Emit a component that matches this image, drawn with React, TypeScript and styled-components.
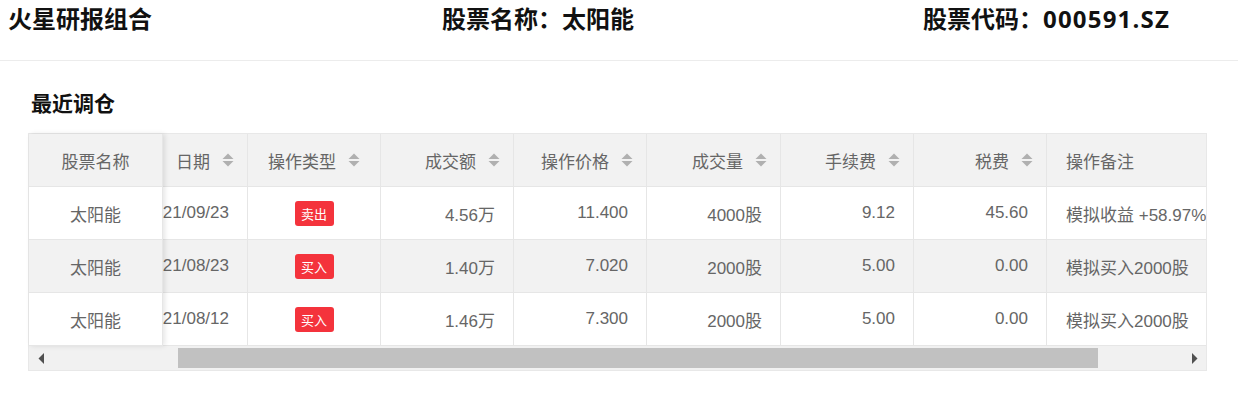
import React from 'react';
import styled, { createGlobalStyle } from 'styled-components';

type Align = 'left' | 'center' | 'right';

interface Column {
  key: string;
  title: string;
  width: number;
  align: Align;
  sortable?: boolean;
}

interface Trade {
  name: string;
  date: string;
  type: '买入' | '卖出';
  amount: string;
  price: string;
  volume: string;
  fee: string;
  tax: string;
  note: string;
}

const FIXED_WIDTH = 134;
const SCROLL_LEFT = 160;
const VIEW_WIDTH = 1177;
const ARROW_WIDTH = 24;

const columns: Column[] = [
  { key: 'date', title: '日期', width: 245, align: 'right', sortable: true },
  { key: 'type', title: '操作类型', width: 133, align: 'center', sortable: true },
  { key: 'amount', title: '成交额', width: 133, align: 'right', sortable: true },
  { key: 'price', title: '操作价格', width: 133, align: 'right', sortable: true },
  { key: 'volume', title: '成交量', width: 134, align: 'right', sortable: true },
  { key: 'fee', title: '手续费', width: 133, align: 'right', sortable: true },
  { key: 'tax', title: '税费', width: 133, align: 'right', sortable: true },
  { key: 'note', title: '操作备注', width: 266, align: 'left' },
];

const trades: Trade[] = [
  {
    name: '太阳能',
    date: '2021/09/23',
    type: '卖出',
    amount: '4.56万',
    price: '11.400',
    volume: '4000股',
    fee: '9.12',
    tax: '45.60',
    note: '模拟收益 +58.97%',
  },
  {
    name: '太阳能',
    date: '2021/08/23',
    type: '买入',
    amount: '1.40万',
    price: '7.020',
    volume: '2000股',
    fee: '5.00',
    tax: '0.00',
    note: '模拟买入2000股',
  },
  {
    name: '太阳能',
    date: '2021/08/12',
    type: '买入',
    amount: '1.46万',
    price: '7.300',
    volume: '2000股',
    fee: '5.00',
    tax: '0.00',
    note: '模拟买入2000股',
  },
];

const contentWidth = FIXED_WIDTH + columns.reduce((sum, c) => sum + c.width, 0);

const GlobalStyle = createGlobalStyle`
  body {
    margin: 0;
    background: #fff;
    font-family: "Liberation Sans", Arial, "Noto Sans CJK SC", sans-serif;
  }
`;

const Page = styled.div`
  width: 1238px;
`;

const TopBar = styled.header`
  display: grid;
  grid-template-columns: 434px 481px 1fr;
  height: 61px;
  box-sizing: border-box;
  padding: 3px 0 0 8px;
  border-bottom: 1px solid #ececec;
`;

const TopItem = styled.div`
  font-family: "Open Sans", "Noto Sans CJK SC", sans-serif;
  font-size: 24px;
  font-weight: 700;
  line-height: 32px;
  color: #111;
  white-space: nowrap;
`;

const Code = styled.span`
  letter-spacing: 1.2px;
`;

const Section = styled.section`
  padding: 27px 31px 0 28px;
`;

const SectionTitle = styled.h2`
  margin: 0 0 17px 3px;
  font-family: "Noto Sans CJK SC", sans-serif;
  font-size: 21px;
  font-weight: 700;
  line-height: 28px;
  color: #111;
`;

const Frame = styled.div`
  border: 1px solid #e8e8e8;
  background: #fff;
`;

const Body = styled.div`
  display: flex;
`;

const FixedPane = styled.div`
  position: relative;
  z-index: 1;
  flex: 0 0 ${FIXED_WIDTH}px;
  box-shadow: 2px 0 5px rgba(0, 0, 0, 0.1);
`;

const ScrollPane = styled.div`
  flex: 1;
  overflow: hidden;
`;

const ScrollInner = styled.div<{ $offset: number }>`
  width: ${contentWidth - FIXED_WIDTH}px;
  margin-left: -${(p) => p.$offset}px;
`;

const Row = styled.div<{ $striped?: boolean }>`
  display: flex;
  background: ${(p) => (p.$striped ? '#f2f2f2' : '#fff')};
`;

const justify = { left: 'flex-start', center: 'center', right: 'flex-end' };

const HeadCell = styled.div<{ $w?: number; $align: Align }>`
  display: flex;
  align-items: center;
  justify-content: ${(p) => justify[p.$align]};
  box-sizing: border-box;
  width: ${(p) => (p.$w ? `${p.$w}px` : 'auto')};
  flex-shrink: 0;
  height: 53px;
  padding: ${(p) => (p.$align === 'right' ? '0 13px 0 10px' : p.$align === 'left' ? '0 10px 0 19px' : '0 10px')};
  background: #f2f2f2;
  border-right: 1px solid #e6e6e6;
  border-bottom: 1px solid #e6e6e6;
  font-family: "Noto Sans CJK SC", sans-serif;
  font-size: 17px;
  color: #666;
  white-space: nowrap;
`;

const Cell = styled.div<{ $w?: number; $align: Align }>`
  display: flex;
  align-items: center;
  justify-content: ${(p) => justify[p.$align]};
  box-sizing: border-box;
  width: ${(p) => (p.$w ? `${p.$w}px` : 'auto')};
  flex-shrink: 0;
  height: 53px;
  padding: ${(p) => (p.$align === 'right' ? '0 18px 0 10px' : p.$align === 'left' ? '0 10px 0 19px' : '0 10px')};
  border-right: 1px solid #e6e6e6;
  border-bottom: 1px solid #e6e6e6;
  font-size: 17px;
  color: #666;
  white-space: nowrap;
  overflow: hidden;
`;

const Badge = styled.span`
  display: inline-flex;
  align-items: center;
  justify-content: center;
  width: 39px;
  height: 25px;
  border-radius: 3px;
  background: #f4333c;
  color: #fff;
  font-family: "Noto Sans CJK SC", sans-serif;
  font-size: 13px;
`;

const SortWrap = styled.span`
  display: inline-flex;
  margin-left: 12px;
`;

const Scrollbar = styled.div`
  display: flex;
  height: 24px;
  background: #f1f1f1;
`;

const ArrowButton = styled.div`
  display: flex;
  align-items: center;
  justify-content: center;
  flex: 0 0 ${ARROW_WIDTH}px;
`;

const Track = styled.div`
  flex: 1;
  padding: 2px 0;
`;

const Thumb = styled.div`
  height: 20px;
  background: #c1c1c1;
`;

const SortIcon = () => (
  <SortWrap>
    <svg width="12" height="14" viewBox="0 0 12 14">
      <path d="M0.5 6 L6 0.5 L11.5 6 Z" fill="#b0b0b0" />
      <path d="M0.5 8 L11.5 8 L6 13.5 Z" fill="#b0b0b0" />
    </svg>
  </SortWrap>
);

const Arrow = ({ dir }: { dir: 'left' | 'right' }) => (
  <svg width="7" height="11" viewBox="0 0 7 11">
    {dir === 'left' ? (
      <path d="M6 0 L6 11 L0.5 5.5 Z" fill="#505050" />
    ) : (
      <path d="M1 0 L1 11 L6.5 5.5 Z" fill="#505050" />
    )}
  </svg>
);

const renderValue = (trade: Trade, key: string) => {
  if (key === 'type') return <Badge>{trade.type}</Badge>;
  return trade[key as keyof Trade];
};

const App = () => {
  const trackLength = VIEW_WIDTH - ARROW_WIDTH * 2;
  const thumbLeft = (trackLength * SCROLL_LEFT) / contentWidth;
  const thumbWidth = (trackLength * VIEW_WIDTH) / contentWidth;

  return (
    <Page>
      <GlobalStyle />
      <TopBar>
        <TopItem>火星研报组合</TopItem>
        <TopItem>股票名称：太阳能</TopItem>
        <TopItem>
          股票代码：<Code>000591.SZ</Code>
        </TopItem>
      </TopBar>

      <Section>
        <SectionTitle>最近调仓</SectionTitle>
        <Frame>
          <Body>
            <FixedPane>
              <HeadCell $align="center">股票名称</HeadCell>
              {trades.map((t, i) => (
                <Row key={i} $striped={i % 2 === 1}>
                  <Cell $w={FIXED_WIDTH} $align="center">
                    {t.name}
                  </Cell>
                </Row>
              ))}
            </FixedPane>

            <ScrollPane>
              <ScrollInner $offset={SCROLL_LEFT}>
                <Row>
                  {columns.map((c) => (
                    <HeadCell key={c.key} $w={c.width} $align={c.align}>
                      {c.title}
                      {c.sortable && <SortIcon />}
                    </HeadCell>
                  ))}
                </Row>
                {trades.map((t, i) => (
                  <Row key={i} $striped={i % 2 === 1}>
                    {columns.map((c) => (
                      <Cell key={c.key} $w={c.width} $align={c.align}>
                        {renderValue(t, c.key)}
                      </Cell>
                    ))}
                  </Row>
                ))}
              </ScrollInner>
            </ScrollPane>
          </Body>

          <Scrollbar>
            <ArrowButton>
              <Arrow dir="left" />
            </ArrowButton>
            <Track>
              <Thumb style={{ marginLeft: thumbLeft, width: thumbWidth }} />
            </Track>
            <ArrowButton>
              <Arrow dir="right" />
            </ArrowButton>
          </Scrollbar>
        </Frame>
      </Section>
    </Page>
  );
};

export default App;
